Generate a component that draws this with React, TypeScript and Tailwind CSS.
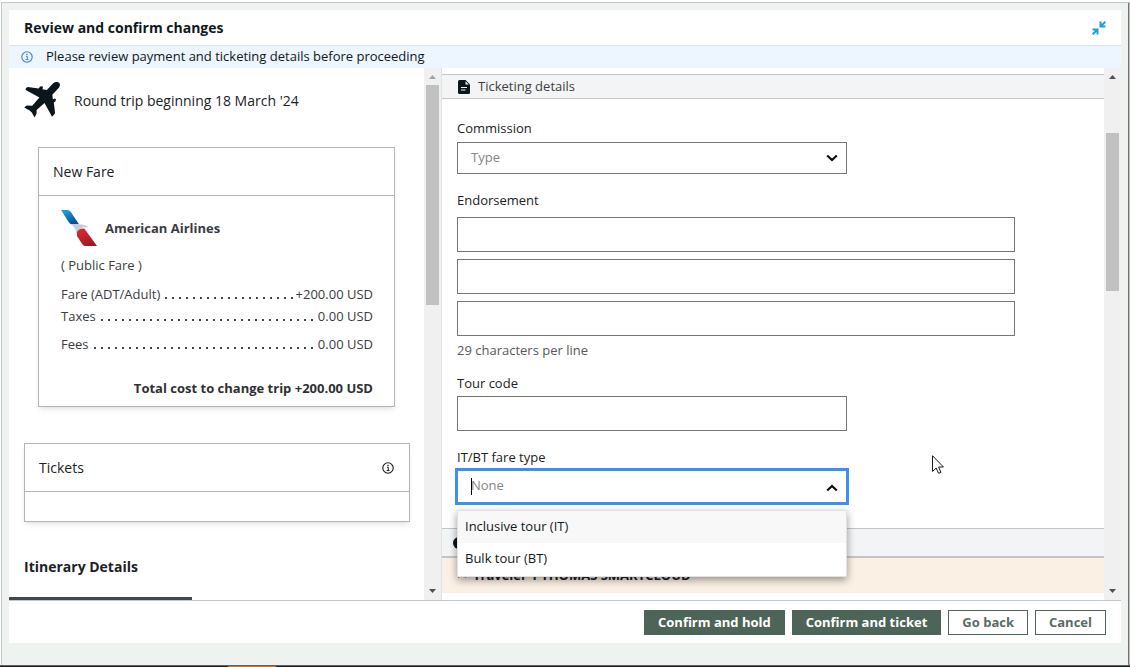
import React from "react";

function ScrollArrow({ up, dim }: { up?: boolean; dim?: boolean }) {
  return (
    <svg viewBox="0 0 7 4" className={dim ? "h-1 w-[7px] fill-[#a3a3a3]" : "h-1 w-[7px] fill-[#505050]"} aria-hidden="true">
      <path d={up ? "M0 4L3.5 0L7 4Z" : "M0 0L3.5 4L7 0Z"} />
    </svg>
  );
}

function InfoIcon({ className }: { className: string }) {
  return (
    <svg viewBox="0 0 12 12" className={className} fill="none" aria-hidden="true">
      <circle cx="6" cy="6" r="5.2" stroke="currentColor" strokeWidth="1.1" />
      <path d="M5 5.3h1.3v3.2M4.7 8.6h2.8" stroke="currentColor" strokeWidth="1" />
      <rect x="5.3" y="2.8" width="1.3" height="1.3" fill="currentColor" />
    </svg>
  );
}

function PlaneIcon() {
  return (
    <svg viewBox="0 0 36 36" className="size-9 fill-[#0b151c]" aria-hidden="true">
      <path d="M29.2 1.3C31 -.2 34.2-.4 35.3.9C36.4 2.200 36 4.600 34.400 6.200L28.300 12.800L28.900 17.300L30.900 16.400L32 17.300L31.400 19.500L29.800 20.500L31 30.500Q31 31.500 30.200 32.500L28 34.800L20.500 20.900L12.600 28L12.500 31.800L10.600 35.600L7.800 30.400L5.600 28.500L.2 25.400L2.800 23.600L8.200 23.700L15.400 15.600L2.200 8.200Q.8 7 2.400 5.800L3.800 5L14.800 6.500L16 4.600L18.200 4.200L19 5.200L18.500 7.200L22.800 7.900Z" />
    </svg>
  );
}

function AirlineLogo() {
  return (
    <svg viewBox="0 0 36 36" className="size-9" aria-hidden="true">
      <defs>
        <linearGradient id="tail" x1="0" y1="0" x2="0.5" y2="1">
          <stop offset="0" stopColor="#1aaee5" />
          <stop offset="1" stopColor="#0a4f97" />
        </linearGradient>
        <linearGradient id="body" x1="0" y1="0" x2="0.5" y2="1">
          <stop offset="0" stopColor="#e32a30" />
          <stop offset="1" stopColor="#9d1c24" />
        </linearGradient>
      </defs>
      <path d="M0 0H6.500C9 .3 10 2 11.500 4.500L18 14.200L10.500 14.300C8.500 14 8 12.500 7 11Z" fill="url(#tail)" />
      <path d="M10.500 14.300L18 14.200C22 14.500 27 15.500 27.500 17.500C24 16.800 19 17.500 17 20.500L15.500 24C15.500 20 13 17 10.500 14.300Z" fill="#c6cdd6" />
      <path d="M16 22C17 19.500 20 17.800 23.500 18.700L36 36H24C22.500 35.800 21.500 34.500 20.500 33L16 26Z" fill="url(#body)" />
    </svg>
  );
}

function Chevron({ up }: { up?: boolean }) {
  return (
    <svg viewBox="0 0 12 8" className="h-2 w-3" fill="none" stroke="#0b0b0b" strokeWidth="2.2" aria-hidden="true">
      <path d={up ? "M1.200 6.500L6 2L10.800 6.500" : "M1.200 1.500L6 6L10.800 1.500"} />
    </svg>
  );
}

function FareRow({ name, amount, className }: { name: string; amount: string; className?: string }) {
  return (
    <div className={"flex items-baseline " + (className ?? "")}>
      <dt className="shrink-0">{name}</dt>
      <dd className="flex min-w-0 grow items-baseline">
        <svg className="mr-[2px] ml-1 h-[2px] min-w-0 grow" aria-hidden="true">
          <defs>
            <pattern id="leader" width="7" height="2" patternUnits="userSpaceOnUse">
              <rect x="1" width="2" height="2" fill="#444" />
            </pattern>
          </defs>
          <rect width="100%" height="2" fill="url(#leader)" />
        </svg>
        <span className="shrink-0">{amount}</span>
      </dd>
    </div>
  );
}

const field = "block w-full border border-[#74767c] bg-white px-[13px] pb-[2px] text-[13px] outline-none placeholder:text-[#858585]";
const solid = "h-[25px] bg-[#4d6558] px-[14px] pb-[2px] text-[13px] font-bold text-white";
const outline = "h-[25px] border border-[#4d6558] bg-white px-[13px] pb-[2px] text-[13px] font-bold text-[#5a6b63]";

function TripSummary() {
  return (
    <section className="flex min-h-0 w-[433px] shrink-0 border-r border-[#dfe1e3]">
      <div className="relative min-w-0 grow overflow-hidden pr-[14px] pl-[15px] pt-[14px]">
        <div className="flex items-center gap-[14px]">
          <PlaneIcon />
          <p className="pt-[2px] text-sm">Round trip beginning 18 March '24</p>
        </div>
        <article className="mr-[15px] ml-[14px] mt-[29px] border border-[#b5b5b5] shadow-md shadow-black/8">
          <h2 className="flex h-12 items-center border-b border-[#b5b5b5] px-[14px] text-sm">New Fare</h2>
          <div className="pt-[14px] pr-[21px] pb-2 pl-[22px] text-[#3b3b3f]">
            <div className="flex items-center gap-2">
              <AirlineLogo />
              <strong className="font-bold">American Airlines</strong>
            </div>
            <p className="mt-[9px]">( Public Fare )</p>
            <dl className="mt-[9px]">
              <FareRow name="Fare (ADT/Adult)" amount="+200.00 USD" />
              <FareRow name="Taxes" amount="0.00 USD" className="mt-[2px]" />
              <FareRow name="Fees" amount="0.00 USD" className="mt-2" />
            </dl>
            <p className="mt-6 text-right font-bold text-[#2f3033]">Total cost to change trip +200.00 USD</p>
          </div>
        </article>
        <article className="mt-9 border border-[#b5b5b5] shadow-md shadow-black/8">
          <div className="flex h-12 items-center justify-between border-b border-[#b5b5b5] pr-[15px] pl-[14px]">
            <h2 className="text-sm">Tickets</h2>
            <InfoIcon className="size-3 text-[#1b1b1b]" />
          </div>
          <div className="h-[29px]" />
        </article>
        <h2 className="mt-[35px] text-sm font-bold">Itinerary Details</h2>
        <div className="absolute bottom-0 left-0 h-[3px] w-[183px] bg-[#42474d]" />
      </div>
      <div className="flex w-[17px] shrink-0 flex-col items-center bg-[#f0f0f0] pt-[7px] pb-[7px]" aria-hidden="true">
        <ScrollArrow up dim />
        <div className="mt-[6px] h-[220px] w-[13px] bg-[#c1c1c1]" />
        <div className="grow" />
        <ScrollArrow />
      </div>
    </section>
  );
}

function TicketingForm() {
  return (
    <section className="flex min-h-0 min-w-0 grow">
      <div className="relative min-w-0 grow overflow-hidden pt-[6px]">
        <h2 className="flex h-[25px] items-center gap-2 border-y border-[#c1c6cb] bg-[#f3f4f6] px-4 text-[#3c3e42]">
          <svg viewBox="0 0 12 14" className="h-[14px] w-3" aria-hidden="true">
            <path d="M1.500 0H7.500L12 4.500V12.500Q12 14 10.500 14H1.500Q0 14 0 12.500V1.500Q0 0 1.500 0Z" fill="#0b151c" />
            <path d="M7.500 1.200V4.500H10.800Z" fill="#f3f4f6" />
            <path d="M3 7.500H9M3 10H7.500" stroke="#f3f4f6" strokeWidth="1.100" />
          </svg>
          <span className="pb-[2px]">Ticketing details</span>
        </h2>
        <form className="max-w-[588px] px-[15px] pt-5 leading-[18px]" onSubmit={(e) => e.preventDefault()}>
          <div className="max-w-[390px]">
            <label htmlFor="commission" className="block">Commission</label>
            <div className="relative mt-[5px]">
              <select id="commission" className={field + " h-8 appearance-none text-[#858585]"}>
                <option>Type</option>
              </select>
              <span className="pointer-events-none absolute top-3 right-[9px]"><Chevron /></span>
            </div>
          </div>
          <fieldset className="mt-[17px] flex flex-col gap-[7px]">
            <legend className="mb-2">Endorsement</legend>
            <input aria-label="Endorsement line 1" className={field + " h-[35px]"} />
            <input aria-label="Endorsement line 2" className={field + " h-[35px]"} />
            <input aria-label="Endorsement line 3" className={field + " h-[35px]"} />
          </fieldset>
          <p className="mt-[5px] text-[#55585c]">29 characters per line</p>
          <div className="mt-[15px] max-w-[390px]">
            <label htmlFor="tour" className="block">Tour code</label>
            <input id="tour" className={field + " mt-1 h-[35px]"} />
          </div>
          <div className="mt-[17px] max-w-[390px]">
            <label htmlFor="fare-type" className="block">IT/BT fare type</label>
            <div className="relative mt-1">
              <input
                id="fare-type"
                role="combobox"
                aria-expanded="true"
                aria-controls="fare-type-list"
                placeholder="None"
                className="block h-[33px] w-full bg-white px-[14px] pb-[3px] text-[13px] outline-3 outline-[#3d8ff0] outline-offset-[-1px] placeholder:text-[#858585]"
              />
              <span className="absolute top-2 left-[14px] h-[17px] w-px bg-black" />
              <span className="pointer-events-none absolute top-[14px] right-[9px]"><Chevron up /></span>
              <ul
                id="fare-type-list"
                role="listbox"
                className="absolute top-10 left-0 z-10 w-full border border-[#e2e2e2] bg-white pb-px text-[#101820] shadow-[0_3px_8px_rgba(0,0,0,0.4)]"
              >
                <li role="option" aria-selected="true" className="flex h-8 items-center bg-[#f8f8f8] px-[7px] pb-[2px]">Inclusive tour (IT)</li>
                <li role="option" aria-selected="false" className="flex h-8 items-center px-[7px] pb-[2px]">Bulk tour (BT)</li>
              </ul>
            </div>
          </div>
        </form>
        <div className="mt-[25px] flex h-[30px] items-center border-t border-b-2 border-[#c1c6cb] bg-[#f3f4f6] px-[11px]">
          <span className="size-3 rounded-full bg-[#0b151c]" />
        </div>
        <h3 className="flex h-[35px] items-center gap-[6px] bg-[#fbf0e4] px-[15px] pb-[2px] font-bold text-[#1c2226]">
          <svg viewBox="0 0 10 6" className="h-[6px] w-[10px]" fill="none" stroke="#1c2226" strokeWidth="2" aria-hidden="true">
            <path d="M1 5L5 1L9 5" />
          </svg>
          Traveler 1 THOMAS SMARTCLOUD
        </h3>
      </div>
      <div className="flex w-[17px] shrink-0 flex-col items-center bg-[#f0f0f0] pt-[7px] pb-[7px]" aria-hidden="true">
        <ScrollArrow up />
        <div className="mt-[54px] h-[158px] w-[13px] bg-[#c1c1c1]" />
        <div className="grow" />
        <ScrollArrow />
      </div>
    </section>
  );
}

export default function App() {
  return (
    <div className="flex h-screen flex-col bg-white pt-[2px] [font-family:'Open_Sans',sans-serif] text-[13px] leading-5 text-[#1b2126]">
      <div className="ml-px flex min-h-0 grow border-t border-l border-[#c6c9cb] bg-[#eef3ef]">
        <div className="flex min-h-0 grow border-r border-[#bdbdbd]">
          <div className="flex min-h-0 min-w-0 grow flex-col border-r border-[#707070] pt-[7px] pr-[7px] pb-[22px] pl-[7px]">
            <main className="flex min-h-0 grow flex-col bg-white">
              <header className="flex h-9 shrink-0 items-center justify-between border-b border-[#dfe2e5] pr-[15px] pl-[15px]">
                <h1 className="text-sm font-bold text-[#101820]">Review and confirm changes</h1>
                <button type="button" aria-label="Collapse">
                  <svg viewBox="0 0 14 14" className="size-[14px]" fill="none" stroke="#1c9ddd" strokeWidth="2" aria-hidden="true">
                    <path d="M8.500 .5V5.500H13.500M8.800 5.200L13.300 .7M.5 8.500H5.500V13.500M5.200 8.800L.7 13.300" />
                  </svg>
                </button>
              </header>
              <p className="flex h-[22px] shrink-0 items-center gap-[13px] bg-[#edf5fe] px-3 text-[#101820]">
                <InfoIcon className="size-3 text-[#3b7fd0]" />
                <span className="pb-[2px]">Please review payment and ticketing details before proceeding</span>
              </p>
              <div className="flex min-h-0 grow">
                <TripSummary />
                <TicketingForm />
              </div>
              <footer className="flex shrink-0 justify-end gap-[7px] border-t border-[#c1c6cb] pt-[9px] pr-[15px] pb-2">
                <button type="button" className={solid}>Confirm and hold</button>
                <button type="button" className={solid}>Confirm and ticket</button>
                <button type="button" className={outline}>Go back</button>
                <button type="button" className={outline}>Cancel</button>
              </footer>
            </main>
          </div>
        </div>
      </div>
      <div className="h-[2px] shrink-0 border-t border-[#606468] bg-[#1b1b1b] pl-[228px]">
        <div className="h-px w-12 bg-[#c8702a]" />
      </div>
      <svg viewBox="0 0 12 19" className="pointer-events-none absolute top-[455px] left-[932px] h-[19px] w-3" aria-hidden="true">
        <path d="M.5 .7V16.500L4.200 13L6.500 18.300L8.900 17.300L6.600 12H11.400Z" fill="#fff" stroke="#16161e" strokeWidth="1" />
      </svg>
    </div>
  );
}
